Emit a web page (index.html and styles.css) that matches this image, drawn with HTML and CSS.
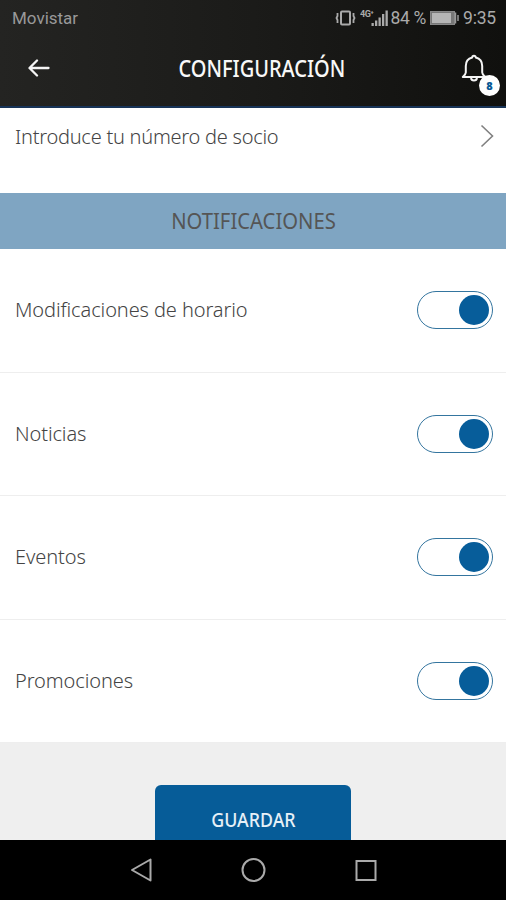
FILE: index.html
```html
<!DOCTYPE html>
<html lang="es">
<head>
  <meta charset="UTF-8" />
  <meta name="viewport" content="width=device-width, initial-scale=1.0" />
  <title>Configuración</title>
  <link rel="stylesheet" href="styles.css">
</head>
<body>
  <div class="app">
    <header class="header">
      <div class="status-bar">
        <span class="carrier">Movistar</span>
        <div class="status-icons">
          <svg class="vibrate" width="21" height="16" viewBox="0 0 21 16" fill="none" stroke="#aaa" stroke-width="2">
            <rect x="6" y="1.500" width="9" height="13" rx="1" />
            <path d="M2.500 3v3l-1 2 1 2v3M18.500 3v3l1 2-1 2v3" stroke-width="1.800" />
          </svg>
          <svg class="signal" width="29" height="18" viewBox="0 0 29 18" fill="#aaa">
            <text class="net" x="0" y="8">4G⁺</text>
            <path d="M11.500 14h2.300v3h-2.300zM15 11.500h2.300v5.500h-2.300zM18.500 8.500h2.300v8.500h-2.300zM22 5h2.300v12h-2.300zM25.500 1.500h2.300v15.500h-2.300z" />
          </svg>
          <span class="battery-text">84 %</span>
          <svg class="battery" width="29" height="14" viewBox="0 0 29 14">
            <rect x="0.500" y="0.500" width="24" height="13" fill="#777" stroke="#888" />
            <rect x="2" y="2" width="19" height="10" fill="#b5b5b5" />
            <path d="M25.500 1.500v11M28 4v6" stroke="#999" stroke-width="1.500" />
          </svg>
          <span class="clock">9:35</span>
        </div>
      </div>
      <div class="toolbar">
        <button class="icon-btn" aria-label="Volver">
          <svg width="22" height="18" viewBox="0 0 22 18" fill="none" stroke="#f4f4f4" stroke-width="2.300" stroke-linecap="round" stroke-linejoin="round">
            <path d="M20.500 9H2M9 1.500L1.500 9L9 16.500" />
          </svg>
        </button>
        <h1 class="title">CONFIGURACIÓN</h1>
        <button class="icon-btn bell" aria-label="Avisos">
          <svg width="26" height="30" viewBox="0 0 26 30" fill="none" stroke="#f4f4f4" stroke-width="2" stroke-linejoin="round">
            <path d="M11.200 4.500a1.800 1.800 0 0 1 3.600 0C19 5.500 21.200 9 21.200 13v6.500c0 1.500 1 2.700 3 4.500H1.800c2-1.800 3-3 3-4.500V13C4.800 9 7 5.500 11.200 4.500z" />
            <path d="M10 25c.5 3.200 5.500 3.200 6 0" />
          </svg>
          <span class="badge">8</span>
        </button>
      </div>
    </header>

    <main class="content">
      <div class="member-row">
        <span class="label">Introduce tu número de socio</span>
        <svg width="14" height="24" viewBox="0 0 14 24" fill="none" stroke="#808080" stroke-width="1.600">
          <path d="M1.500 1.500L12.500 12L1.500 22.500" />
        </svg>
      </div>
      <h2 class="section-title"><span>NOTIFICACIONES</span></h2>
      <div class="setting">
        <span class="label">Modificaciones de horario</span>
        <span class="toggle"></span>
      </div>
      <div class="setting">
        <span class="label">Noticias</span>
        <span class="toggle"></span>
      </div>
      <div class="setting">
        <span class="label">Eventos</span>
        <span class="toggle"></span>
      </div>
      <div class="setting">
        <span class="label">Promociones</span>
        <span class="toggle"></span>
      </div>
      <div class="actions">
        <button class="save-btn"><span>GUARDAR</span></button>
      </div>
    </main>

    <nav class="nav-bar">
      <svg width="24" height="26" viewBox="0 0 24 26" fill="none" stroke="#aaa" stroke-width="2" stroke-linejoin="round">
        <path d="M22.500 2.500v21L4 13z" />
      </svg>
      <svg width="26" height="26" viewBox="0 0 26 26" fill="none" stroke="#aaa" stroke-width="2">
        <circle cx="13.500" cy="13" r="11" />
      </svg>
      <svg width="24" height="24" viewBox="0 0 24 24" fill="none" stroke="#aaa" stroke-width="2">
        <rect x="2.500" y="3" width="19" height="19" />
      </svg>
    </nav>
  </div>
</body>
</html>
```
FILE: styles.css
```css
* {
  box-sizing: border-box;
  margin: 0;
  padding: 0;
}
body {
  font-family: 'Noto Sans', 'Open Sans', sans-serif;
  background: #000;
}
button {
  border: none;
  background: none;
  font-family: inherit;
}
svg {
  display: block;
  flex: none;
}
.app {
  display: flex;
  flex-direction: column;
  height: 900px;
  overflow: hidden;
}
.header {
  flex: none;
  height: 108px;
  background: linear-gradient(90deg, #242422, #1b1b19 50%, #10100e);
  border-bottom: 2px solid #173357;
}
.status-bar {
  display: flex;
  justify-content: space-between;
  align-items: center;
  height: 36px;
  padding: 0 10px 0 12px;
  font-family: Roboto, sans-serif;
  font-size: 17.5px;
  color: #aaa;
}
.carrier {
  color: #999;
  font-size: 17px;
}
.status-icons {
  display: flex;
  align-items: center;
}
.signal {
  margin: 0 1px 0 4px;
}
.net {
  font-size: 9px;
  font-weight: bold;
  letter-spacing: -0.5px;
}
.battery-text {
  letter-spacing: -0.3px;
}
.battery {
  margin: 0 4px;
}
.clock {
  letter-spacing: -0.2px;
}
.toolbar {
  display: flex;
  justify-content: space-between;
  align-items: center;
  height: 64px;
  padding: 0 19px 0 28px;
}
.icon-btn {
  position: relative;
}
.title {
  margin-left: 13px;
  font-size: 23px;
  font-weight: 500;
  color: #f8f8f8;
  transform: scaleX(0.87);
}
.badge {
  position: absolute;
  left: 18px;
  top: 22px;
  width: 21px;
  height: 21px;
  border-radius: 50%;
  background: #fff;
  color: #075a96;
  font-size: 11px;
  font-weight: 900;
  line-height: 21px;
  text-align: center;
}
.content {
  flex: 1;
  min-height: 0;
  overflow: hidden;
  background: #efefef;
}
.member-row {
  display: flex;
  justify-content: space-between;
  height: 85px;
  padding: 16px 12px 0 15px;
  background: #fff;
}
.label {
  font-size: 20px;
  font-weight: 350;
  line-height: 26px;
  letter-spacing: -0.1px;
  color: #444;
}
.member-row .label {
  letter-spacing: -0.25px;
}
.section-title {
  display: flex;
  justify-content: center;
  align-items: center;
  height: 56px;
  padding-bottom: 1px;
  background: #7fa5c2;
  font-size: 22.5px;
  font-weight: 400;
  color: #555;
}
.section-title span {
  transform: scaleX(0.9);
}
.setting {
  display: flex;
  justify-content: space-between;
  align-items: center;
  height: 123.6px;
  padding: 0 13px 0 15px;
  background: #fff;
  border-bottom: 1px solid #eee;
}
.toggle {
  display: flex;
  justify-content: flex-end;
  align-items: center;
  width: 76px;
  height: 38px;
  padding-right: 3px;
  border: 1.5px solid #34759f;
  border-radius: 19px;
}
.toggle::after {
  content: "";
  width: 30px;
  height: 30px;
  border-radius: 50%;
  background: #075d9a;
}
.actions {
  display: flex;
  justify-content: center;
  padding-top: 41.6px;
}
.save-btn {
  width: 196px;
  height: 70px;
  padding-bottom: 1px;
  border-radius: 6px;
  background: #065c98;
  color: #e6f0f7;
  font-size: 20px;
  font-weight: 500;
}
.save-btn span {
  display: inline-block;
  transform: scaleX(0.89);
}
.nav-bar {
  display: flex;
  flex: none;
  justify-content: space-between;
  align-items: center;
  height: 60px;
  padding: 0 128px;
  background: #000;
}
```
